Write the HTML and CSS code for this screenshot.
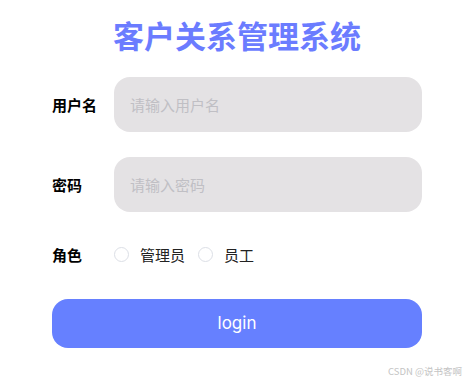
FILE: index.html
```html
<!DOCTYPE html>
<html lang="zh">
<head>
<meta charset="utf-8">
<link rel="stylesheet" href="styles.css">
</head>
<body>
<div class="page">
  <h1 class="title">客户关系管理系统</h1>
  <div class="row">
    <label class="label">用户名</label>
    <div class="input"><span class="ph">请输入用户名</span></div>
  </div>
  <div class="row">
    <label class="label">密码</label>
    <div class="input"><span class="ph">请输入密码</span></div>
  </div>
  <div class="row role">
    <label class="label">角色</label>
    <div class="radios">
      <span class="radio"><span class="dot"></span>管理员</span>
      <span class="radio"><span class="dot"></span>员工</span>
    </div>
  </div>
  <div class="btn">login</div>
</div>
<div class="mark">CSDN @说书客啊</div>
</body>
</html>
```
FILE: styles.css
```css
html, body { margin: 0; padding: 0; background: #fff; }
body {
  width: 468px; height: 386px; position: relative; overflow: hidden;
  font-family: "Noto Sans CJK SC", "Noto Sans", sans-serif;
}
.page {
  width: 370px;
  margin-left: 52px;
  padding-top: 15px;
  display: flex;
  flex-direction: column;
}
.title {
  margin: 0;
  text-align: center;
  font-size: 31px;
  line-height: 40px;
  font-weight: 700;
  color: #6b7cff;
  letter-spacing: 0;
}
.row {
  display: flex;
  align-items: center;
  margin-top: 25px;
}
.row:first-of-type { margin-top: 22px; }
.label {
  width: 62px;
  font-size: 15px;
  font-weight: 700;
  color: #000;
}
.input {
  flex: 1;
  height: 55px;
  background: #e4e2e4;
  border-radius: 16px;
  display: flex;
  align-items: center;
  padding-left: 16px;
}
.ph { font-size: 15px; color: #c0bfc4; }
.role { height: 32px; margin-top: 26px; }
.radios { display: flex; align-items: center; gap: 13px; }
.radio {
  display: flex; align-items: center;
  font-size: 15px; color: #222;
}
.dot {
  width: 13px; height: 13px;
  border: 1px solid #dcdfe6;
  border-radius: 50%;
  background: #fff;
  margin-right: 11px;
}
.btn {
  margin-top: 29px;
  height: 48px;
  border-radius: 16px;
  background: #6680ff;
  color: #fff;
  display: flex; align-items: center; justify-content: center;
  font-family: Inter, Roboto, sans-serif;
  font-size: 17px;
  padding-bottom: 1px;
}
.mark {
  position: absolute;
  right: 6px; bottom: 8px;
  font-size: 9.5px;
  color: #c4c4c4;
}
```
